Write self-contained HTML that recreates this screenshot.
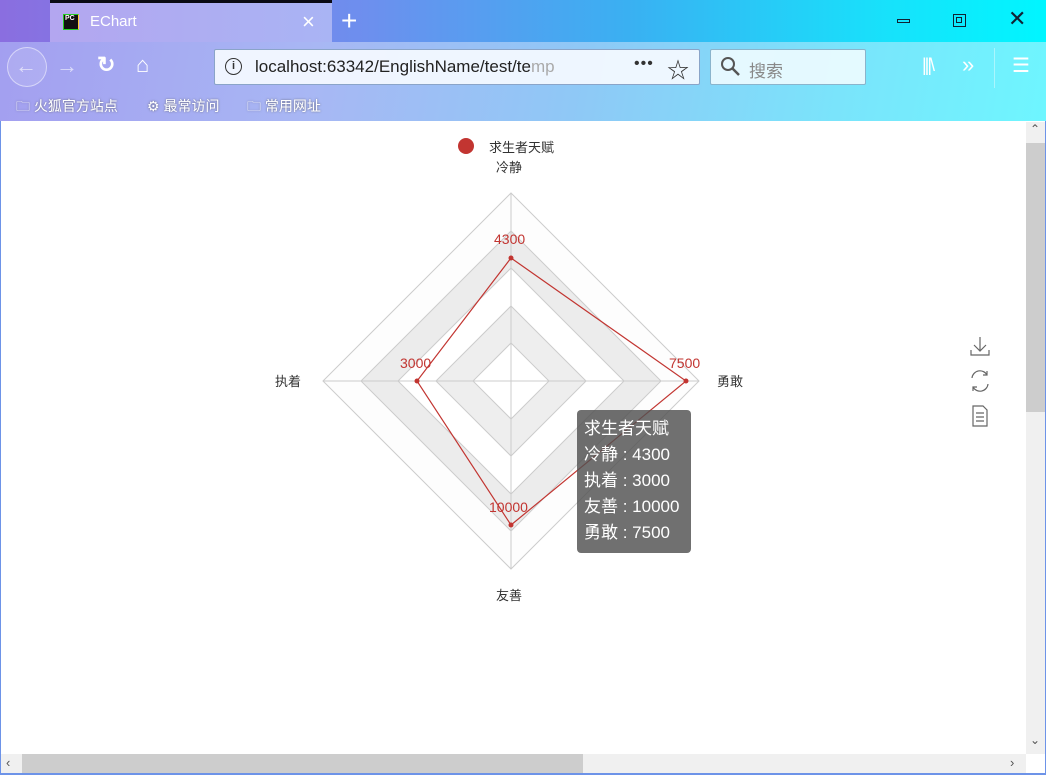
<!DOCTYPE html>
<html><head><meta charset="utf-8"><style>
*{margin:0;padding:0;box-sizing:border-box}
body{width:1046px;height:775px;overflow:hidden;position:relative;background:#fff;font-family:"Liberation Sans","Noto Sans CJK SC",sans-serif}
#chrome{position:absolute;left:0;top:0;width:1046px;height:121px;background:linear-gradient(100deg,#8f78e6 0%,#a6a9f0 25%,#6fa8f0 50%,#45d0f8 75%,#10f4ff 100%);border-bottom:1px solid #4a7fb8}
#topbar{position:absolute;left:0;top:0;width:1046px;height:42px;background:linear-gradient(90deg,#8a6ee0 0%,#6d8fee 35%,#3ab0f2 60%,#17e2fb 85%,#00f6ff 100%)}
#tab{position:absolute;left:50px;top:3px;width:282px;height:39px;background:linear-gradient(90deg,#b3a6f0,#a9b4f4)}
#tab:before{content:"";position:absolute;left:0;top:-3px;width:282px;height:3px;background:#0a0a14}
#toolbar{position:absolute;left:0;top:42px;width:1046px;height:79px;background:linear-gradient(100deg,#a39ff0 0%,#a8b7f4 30%,#8fc8f6 55%,#7ae4fb 80%,#6ef6ff 100%)}
.ic{position:absolute;color:#fff}
#url{position:absolute;left:214px;top:49px;width:486px;height:36px;background:rgba(245,250,255,.93);border:1px solid #8aa4c8;border-radius:2px}
#search{position:absolute;left:710px;top:49px;width:156px;height:36px;background:rgba(240,252,255,.9);border:1px solid #8ab4cc;border-radius:2px}
.bm{position:absolute;top:96px;font-size:14px;color:#fff;text-shadow:0 0 2px #667}
.t{position:absolute;font-size:13px;color:#333;white-space:nowrap}
.r{position:absolute;font-size:14px;color:#c23531}
</style></head><body>
<div id="chrome"></div>
<div id="topbar"></div>
<div id="tab"></div>
<div style="position:absolute;left:63px;top:14px;width:16px;height:16px;background:#111;border:1px solid #2c2;border-right-color:#fc3"><span style="position:absolute;left:1px;top:0;font-size:7px;color:#fff;font-weight:bold">PC</span></div>
<div style="position:absolute;left:90px;top:13px;font-size:15px;color:#fff">EChart</div>
<div class="ic" style="left:302px;top:9px;font-size:22px">×</div>
<div class="ic" style="left:341px;top:5px;font-size:28px;font-weight:300">+</div>
<div style="position:absolute;left:897px;top:19px;width:13px;height:4px;border:1.5px solid #123"></div>
<div style="position:absolute;left:953px;top:14px;width:13px;height:13px;border:1.5px solid #123"><div style="margin:2px;width:6px;height:6px;border:1px solid #123"></div></div>
<div style="position:absolute;left:1008px;top:6px;font-size:22px;color:#123">✕</div>
<div id="toolbar"></div>
<div style="position:absolute;left:7px;top:47px;width:40px;height:40px;border-radius:50%;border:1px solid rgba(255,255,255,.5);background:rgba(255,255,255,.12)"></div>
<div class="ic" style="left:15px;top:53px;font-size:22px;opacity:.6">←</div>
<div class="ic" style="left:56px;top:53px;font-size:22px;opacity:.6">→</div>
<div class="ic" style="left:97px;top:52px;font-size:22px;font-weight:bold">↻</div>
<div class="ic" style="left:136px;top:52px;font-size:22px">⌂</div>
<div id="url"></div>
<div style="position:absolute;left:225px;top:58px;width:17px;height:17px;border:1.5px solid #333;border-radius:50%;font-size:11px;text-align:center;line-height:14px;color:#333;font-weight:bold">i</div>
<div style="position:absolute;left:255px;top:57px;font-size:17px;color:#222">localhost:63342/EnglishName/test/te<span style="color:#aaa">mp</span></div>
<div style="position:absolute;left:634px;top:55px;font-size:16px;color:#333;letter-spacing:1px">•••</div>
<div style="position:absolute;left:667px;top:53px;font-size:22px;color:#333">☆</div>
<div id="search"></div>
<svg style="position:absolute;left:720px;top:56px" width="22" height="22"><circle cx="8" cy="8" r="6" fill="none" stroke="#555" stroke-width="2"/><line x1="12.5" y1="12.5" x2="19" y2="19" stroke="#555" stroke-width="2.5"/></svg>
<div style="position:absolute;left:749px;top:57px;font-size:17px;color:#888">搜索</div>
<div class="ic" style="left:922px;top:55px;font-size:18px;letter-spacing:-2px">|||\</div>
<div class="ic" style="left:962px;top:52px;font-size:22px">»</div>
<div style="position:absolute;left:994px;top:48px;width:1px;height:40px;background:rgba(255,255,255,.4)"></div>
<div class="ic" style="left:1012px;top:53px;font-size:20px">☰</div>
<div class="bm" style="left:16px">🗀 火狐官方站点</div>
<div class="bm" style="left:147px">⚙ 最常访问</div>
<div class="bm" style="left:247px">🗀 常用网址</div>

<svg style="position:absolute;left:0;top:122px" width="1026" height="632">
<g transform="translate(0,-122)">
<circle cx="466" cy="146" r="8" fill="#c23531"/>
<polygon points="511,193 699,381 511,569 323,381" fill="rgba(250,250,250,0.3)"/>
<polygon points="511,231 661,381 511,531 361,381" fill="rgba(200,200,200,0.3)"/>
<polygon points="511,268 624,381 511,494 398,381" fill="#fff"/>
<polygon points="511,306 586,381 511,456 436,381" fill="rgba(200,200,200,0.3)"/>
<polygon points="511,343 549,381 511,419 473,381" fill="#fff"/>
<g fill="none" stroke="#ccc" stroke-width="1">
<polygon points="511,193 699,381 511,569 323,381"/>
<polygon points="511,231 661,381 511,531 361,381"/>
<polygon points="511,268 624,381 511,494 398,381"/>
<polygon points="511,306 586,381 511,456 436,381"/>
<polygon points="511,343 549,381 511,419 473,381"/>
<line x1="511" y1="193" x2="511" y2="569"/><line x1="323" y1="381" x2="699" y2="381"/>
</g>
<polygon points="511,258 686,381 511,525 417,381" fill="none" stroke="#c23531" stroke-width="1.2"/>
<g fill="#c23531"><circle cx="511" cy="258" r="2.5"/><circle cx="686" cy="381" r="2.5"/><circle cx="511" cy="525" r="2.5"/><circle cx="417" cy="381" r="2.5"/></g>
<g fill="none" stroke="#666" stroke-width="1.2">
<path d="M980 337v14M974 345l6 6 6-6M971 350v5h18v-5"/>
<path d="M972 378a8 8 0 0 1 15-3M988 384a8 8 0 0 1-15 3M987 371v4h-4M973 391v-4h4"/>
<path d="M973 406h10l4 4v16h-14zM976 413h8M976 417h8M976 421h8"/>
</g>
</g></svg>
<div class="t" style="left:489px;top:137px">求生者天赋</div>
<div class="t" style="left:496px;top:157px">冷静</div>
<div class="t" style="left:275px;top:371px">执着</div>
<div class="t" style="left:717px;top:371px">勇敢</div>
<div class="t" style="left:496px;top:585px">友善</div>
<div class="r" style="left:494px;top:231px">4300</div>
<div class="r" style="left:400px;top:355px">3000</div>
<div class="r" style="left:669px;top:355px">7500</div>
<div class="r" style="left:489px;top:499px">10000</div>
<div style="position:absolute;left:577px;top:410px;width:114px;height:143px;background:rgba(80,80,80,.82);border-radius:4px;color:#fff;font-size:17px;line-height:26px;padding:6px 0 0 7px;white-space:nowrap">求生者天赋<br>冷静 : 4300<br>执着 : 3000<br>友善 : 10000<br>勇敢 : 7500</div>

<div style="position:absolute;left:1026px;top:122px;width:20px;height:632px;background:#f0f0f0"></div>
<div style="position:absolute;left:1026px;top:143px;width:20px;height:269px;background:#cdcdcd"></div>
<div style="position:absolute;left:1030px;top:122px;font-size:12px;color:#555">⌃</div>
<div style="position:absolute;left:1030px;top:733px;font-size:12px;color:#555">⌄</div>
<div style="position:absolute;left:0;top:754px;width:1026px;height:19px;background:#f0f0f0"></div>
<div style="position:absolute;left:22px;top:754px;width:561px;height:19px;background:#cdcdcd"></div>
<div style="position:absolute;left:6px;top:755px;font-size:13px;color:#555">‹</div>
<div style="position:absolute;left:1010px;top:755px;font-size:13px;color:#555">›</div>
<div style="position:absolute;left:0;top:773px;width:1046px;height:2px;background:#6d93e8"></div>
<div style="position:absolute;left:0;top:121px;width:1px;height:654px;background:#6d93e8"></div>
<div style="position:absolute;left:1045px;top:121px;width:1px;height:654px;background:#6d93e8"></div>
</body></html>
